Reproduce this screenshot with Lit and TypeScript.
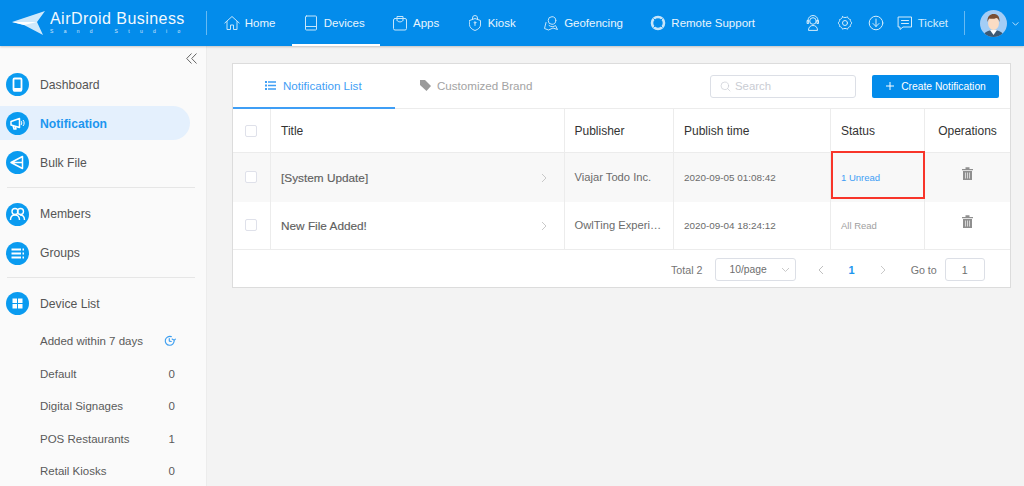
import { LitElement, html, css, svg } from "lit";
import { customElement } from "lit/decorators.js";

const s = (w: number, body: unknown, vb = "0 0 16 16", sw = 1) => html`<svg class="ic" width=${w} height=${w} viewBox=${vb} fill="none" stroke="currentColor" stroke-width=${sw} stroke-linecap="round" stroke-linejoin="round">${body}</svg>`;

const navIcons: Record<string, unknown> = {
  home: s(16, svg`<path d="M.8 8 8 1.500 15.200 8M3 6.500v8h3.500V10h3v4.500H13v-8"/>`),
  devices: s(16, svg`<rect x="2.500" y="1" width="11" height="14" rx="1"/><path d="M2.500 11.500h11"/>`),
  apps: s(16, svg`<rect x="1.500" y="3.500" width="13" height="11.500" rx="1.500"/><path d="M5 5V1.500h6V5M5 5.500c1 2 5 2 6 0"/>`),
  kiosk: s(16, svg`<path d="M2.500 5.500 8 3.500l5.500 2V10c0 2.500-2.500 4.500-5.500 5.500C5 14.500 2.500 12.500 2.500 10zM5.500 4.500V3a2.500 2.500 0 0 1 5 0v1.500"/><path d="M8 7.500v3"/><circle cx="8" cy="7.500" r=".8"/>`),
  geo: s(16, svg`<circle cx="9" cy="5.500" r="3.800"/><path d="M6 10.500c1.500 1.500 5 1.500 6.500 0l2 4L10 13l-4.500 2-4-1.500L3 7.500"/>`),
  remote: s(16, svg`<circle cx="8" cy="8" r="6" stroke-width="2.600"/><path d="M3.800 3.800 5.800 5.800M12.200 3.800 10.200 5.800M3.800 12.200 5.800 10.200M12.200 12.200 10.200 10.200" stroke="#038ceb" stroke-width="1"/>`),
};

const sideIcons: Record<string, unknown> = {
  dash: svg`<rect x="7.500" y="5.500" width="8" height="12" rx="1" fill="none" stroke="#fff" stroke-width="1.800"/><path d="M7 15h9v2.500a1 1 0 0 1-1 1H8a1 1 0 0 1-1-1z" fill="#fff"/>`,
  notif: svg`<path d="M5 9.500 13.500 6.500v9L5 13zM7 13.500l1 3.500h2l-1-3" fill="none" stroke="#fff" stroke-width="1.500" stroke-linejoin="round"/><path d="M15 9c1 .8 1 3 0 4M17 8c1.500 1.500 1.500 4.500 0 6" fill="none" stroke="#fff"/>`,
  bulk: svg`<path d="M16.500 5.500 5 11.500l11.500 6zM5 11.500h11.500" fill="none" stroke="#fff" stroke-width="1.500" stroke-linejoin="round"/>`,
  members: svg`<circle cx="9" cy="8.500" r="3" fill="none" stroke="#fff" stroke-width="1.400"/><circle cx="14.500" cy="8.500" r="3" fill="none" stroke="#fff" stroke-width="1.400"/><path d="M4.500 17c0-3.500 2-5 4.500-5s4.500 1.500 4.500 5M14 12c2.500 0 4.500 1.500 4.500 5" fill="none" stroke="#fff" stroke-width="1.400"/>`,
  groups: svg`<path d="M5.500 7.500H15M5.500 11.500H15M5.500 15.500H15" stroke="#fff" stroke-width="2"/><path d="M16.500 7.500h1.500M16.500 11.500h1.500M16.500 15.500h1.500" stroke="#fff" stroke-width="2"/>`,
  list: svg`<path d="M6.500 6.500h4.500v4.500H6.500zM12 6.500h4.500v4.500H12zM6.500 12h4.500v4.500H6.500zM12 12h4.500v4.500H12z" fill="#fff"/>`,
};

const circle = (k: string) => html`<svg class="circ" width="23" height="23" viewBox="0 0 23 23"><circle cx="11.500" cy="11.500" r="11.500" fill="#0a9bf0"/>${sideIcons[k]}</svg>`;

const trash = html`<svg width="11" height="13" viewBox="0 0 11 13" fill="#8f8f8f"><path d="M0 2h11v1.200H0zM3.500 .3h4V2h-4zM1 4h9v9H1z"/><path d="M3.500 5.500v6M5.500 5.500v6M7.500 5.500v6" stroke="#f5f5f5" stroke-width=".7"/></svg>`;
const chev = html`<svg class="chev" width="6" height="10" viewBox="0 0 6 10" fill="none" stroke="#c9c9c9"><path d="M1 1l4 4-4 4"/></svg>`;

@customElement("app-root")
export class AppRoot extends LitElement {
  static styles = css`
    :host { display: block; width: 1024px; height: 486px; overflow: hidden; font-family: "Liberation Sans", Arial, sans-serif; background: #f3f3f3; }
    .ic { display: block; flex: none; }
    header { height: 46px; background: #038ceb; color: #fff; display: flex; align-items: center; box-shadow: 0 1px 2px rgba(0,0,0,.2); position: relative; z-index: 2; }
    .logo { width: 206px; height: 46px; flex: none; display: flex; align-items: center; padding-left: 12px; box-sizing: border-box; position: relative; }
    .logo-t { margin-left: 5px; margin-top: -1px; display: flex; flex-direction: column; }
    .logo-a { font-size: 16px; line-height: 16px; letter-spacing: .45px; white-space: nowrap; opacity: .95; }
    .logo-b { font-size: 5px; line-height: 7px; letter-spacing: 10.300px; white-space: nowrap; opacity: .8; margin-top: 1px; }
    .vd { width: 1px; height: 24px; background: rgba(255,255,255,.4); flex: none; }
    nav { display: flex; height: 46px; margin-left: 3px; }
    .n { display: flex; align-items: center; gap: 5px; font-size: 11.500px; height: 46px; padding: 0 13.700px; box-sizing: border-box; color: #e9f5fd; white-space: nowrap; position: relative; }
    .n svg { opacity: .85; }
    .n.on::after { content: ""; position: absolute; left: 3px; right: -2px; bottom: 0; height: 2px; background: #fff; }
    .tools { margin-left: auto; display: flex; align-items: center; height: 46px; color: #d4ecfb; font-size: 11.500px; padding-right: 5px; }
    .tools .t { margin-right: 15px; }
    .tools .t.agent { margin-right: 16px; }
    .tools .t.dl { margin-right: 13px; }
    .ticket { display: flex; gap: 5px; align-items: center; margin-right: 16px; white-space: nowrap; }
    .avatar { margin-left: 15px; margin-right: 5px; flex: none; display: block; }
    .main { display: flex; height: 440px; }
    aside { width: 207px; flex: none; height: 440px; box-sizing: border-box; background: #fafafa; border-right: 1px solid #ececec; overflow: hidden; color: #555; }
    .col { height: 19px; box-sizing: border-box; padding: 5px 9px 0 0; display: flex; justify-content: flex-end; align-items: center; color: #666; }
    .it { height: 39px; display: flex; align-items: center; font-size: 12.200px; position: relative; }
    .it .circ { margin-left: 6px; margin-right: 11px; flex: none; position: relative; }
    .it span { position: relative; }
    .it.on { color: #1c96ef; font-weight: 700; }
    .it.on::before { content: ""; position: absolute; left: 0; top: 2px; width: 190px; height: 34px; background: #e4f0fd; border-radius: 0 17px 17px 0; }
    hr { border: 0; height: 1px; background: #e6e6e6; margin: 5px 7px 6.500px 7px; width: 188px; }
    hr.second { margin-top: 4px; }
    .sub { height: 32.500px; display: flex; align-items: center; padding: 0 31px 0 40px; font-size: 11.500px; justify-content: space-between; color: #5a5a5a; }
    .subs { margin-top: 2px; }
    .clock { margin-right: -2px; color: #3a9df0; }
    .content { flex: 1; padding: 17px 13px 0 25px; }
    .card { width: 779px; height: 225px; box-sizing: border-box; background: #fff; border: 1px solid #dcdcdc; position: relative; }
    .tabs { height: 45px; display: flex; align-items: center; border-bottom: 1px solid #ececec; box-sizing: border-box; position: relative; }
    .tab { display: flex; align-items: center; gap: 7px; font-size: 11.600px; height: 44px; box-sizing: border-box; white-space: nowrap; }
    .tab.a { width: 162px; padding-left: 32px; color: #3f9ef5; border-bottom: 2px solid #3f9ef5; margin-bottom: -1px; height: 45px; }
    .tab.b { padding-left: 25px; padding-bottom: 2px; color: #a3a3a3; gap: 6px; }
    .search { margin-left: auto; width: 146px; height: 23px; box-sizing: border-box; border: 1px solid #dcdfe6; border-radius: 3px; display: flex; align-items: center; padding-left: 9px; gap: 4px; color: #c9ccd3; font-size: 11.400px; margin-right: 16px; }
    .create { width: 127px; height: 23px; margin-right: 11px; background: #038ceb; color: #fff; font-size: 10.300px; display: flex; align-items: center; justify-content: center; gap: 6px; border-radius: 2px; white-space: nowrap; }
    .r { display: grid; grid-template-columns: 38px 294px 109px 157px 94px 85px; }
    .r > div { display: flex; align-items: center; box-sizing: border-box; border-right: 1px solid #ececec; padding-left: 10px; font-size: 11px; color: #6b6b6b; position: relative; white-space: nowrap; overflow: visible; }
    .r > div:last-child { border-right: 0; padding-left: 0; justify-content: center; }
    .r > div:first-child { padding-left: 12px; padding-bottom: 1px; }
    .h { height: 44px; border-bottom: 1px solid #ececec; box-sizing: border-box; }
    .h > div { color: #333; font-size: 12px; padding-top: 1px; }
    .h > div:first-child { padding-top: 0; padding-bottom: 0; }
    .r1 { height: 49px; background: #f8f8f8; }
    .r2 { height: 48px; border-bottom: 1px solid #ececec; box-sizing: border-box; }
    .r > .title { font-size: 11.800px; color: #606060; justify-content: space-between; padding-right: 17px; padding-left: 10px; }
    .title b { font-weight: 400; -webkit-text-stroke: .15px #606060; }
    .r > .pub { font-size: 11.200px; padding-left: 9.500px; padding-bottom: 1px; }
    .r > .time { font-size: 9.900px; padding-bottom: 1px; }
    .r > .stat { padding-bottom: 1px; }
    .h > .pubh { padding-left: 9.500px; }
    .cb { width: 12px; height: 12px; border: 1px solid #dfe1ea; border-radius: 2px; background: #fff; box-sizing: border-box; }
    .unread { color: #3f9ef5; font-size: 9.500px; }
    .allread { color: #a0a0a0; font-size: 9.500px; }
    .mark { position: absolute; left: 0; top: -2px; width: 94px; height: 48px; box-sizing: border-box; border: 2px solid #f8352a; }
    .trash { margin-top: -6px; display: block; }
    .foot { height: 37px; padding-top: 2px; box-sizing: border-box; display: flex; align-items: center; font-size: 10.700px; color: #757575; padding-left: 438px; white-space: nowrap; }
    .sel { width: 81px; height: 23px; box-sizing: border-box; margin-left: 12px; border: 1px solid #dcdfe6; border-radius: 3px; display: flex; align-items: center; justify-content: space-between; padding: 0 5px 0 14px; color: #6e6e6e; font-size: 10.300px; }
    .pg { margin-left: 22px; display: flex; align-items: center; }
    .pg b { color: #1c96ef; font-size: 11px; margin: 0 25px 0 25px; }
    .goto { margin-left: 25px; }
    .inp { width: 40px; height: 23px; margin-left: 8px; box-sizing: border-box; border: 1px solid #dcdfe6; border-radius: 3px; display: flex; align-items: center; justify-content: center; color: #6e6e6e; }
  `;

  private row(cls: string, title: string, pub: string, time: string, status: unknown, mark = false) {
    return html`<div class="r ${cls}">
      <div><span class="cb"></span></div>
      <div class="title"><b>${title}</b>${chev}</div>
      <div class="pub">${pub}</div>
      <div class="time">${time}</div>
      <div class="stat">${status}${mark ? html`<span class="mark"></span>` : ""}</div>
      <div><span class="trash">${trash}</span></div>
    </div>`;
  }

  render() {
    return html`
      <header>
        <div class="logo">
          <svg width="33" height="24" viewBox="0 0 33 24"><path d="M0 11 33 0 25 11 31 24 12 14z" fill="#cfe9fb"/><path d="M0 11 25 11 12 14z" fill="#fff"/></svg>
          <div class="logo-t"><div class="logo-a">AirDroid Business</div><div class="logo-b">Sand Studio</div></div>
        </div>
        <div class="vd"></div>
        <nav>
          <div class="n">${navIcons.home}Home</div>
          <div class="n on">${navIcons.devices}Devices</div>
          <div class="n">${navIcons.apps}Apps</div>
          <div class="n">${navIcons.kiosk}Kiosk</div>
          <div class="n">${navIcons.geo}Geofencing</div>
          <div class="n">${navIcons.remote}Remote Support</div>
        </nav>
        <div class="tools">
          <span class="t agent">${s(16, svg`<circle cx="8" cy="6" r="3.300"/><path d="M3 7V5.500a5 5 0 0 1 10 0V7M2.500 5.500h1.200v3H2.500zM12.300 5.500h1.200v3h-1.200zM3.500 15c0-3 2-4.500 4.500-4.500s4.500 1.500 4.500 4.500z"/>`)}</span>
          <span class="t">${s(16, svg`<path d="M5.500 1.800c1.500 1 3.500 1 5 0 .3 1.500 1.500 2.500 3 2.800-.5 1.500 .5 2.300 1.500 3.400-1 1-2 2-1.500 3.400-1.500 .3-2.700 1.300-3 2.800-1.500-1-3.500-1-5 0-.3-1.500-1.500-2.500-3-2.800C3 10 2 9 1 8c1-1.100 2-1.900 1.500-3.400 1.500-.3 2.700-1.300 3-2.800z"/><circle cx="8" cy="8" r="2.500"/>`)}</span>
          <span class="t dl">${s(16, svg`<circle cx="8" cy="8" r="6.800"/><path d="M8 4v7.500M5 8.500l3 3 3-3"/>`)}</span>
          <span class="ticket">${s(16, svg`<path d="M1.500 2h13v10H6l-3 2.500V12H1.500zM4.500 5.500h7M4.500 8.500h7"/>`)}Ticket</span>
          <div class="vd"></div>
          <svg class="avatar" width="27" height="27" viewBox="0 0 27 27"><defs><clipPath id="av"><circle cx="13.500" cy="13.500" r="13.500"/></clipPath></defs><g clip-path="url(#av)"><rect width="27" height="27" fill="#a3cdf6"/><path d="M3 27c1-5 5-7 10.500-7S23 22 24 27z" fill="#3d5a74"/><path d="M10 20h7l-3.500 5z" fill="#fff"/><ellipse cx="13.500" cy="13" rx="5.500" ry="7" fill="#fbdcc4"/><path d="M7.500 12c-.5-6 3-8 6-8s6.500 1.500 6 8c-1-3-2-4-3-4-2 1-6 1-7 .5-1 .5-1.500 2-2 3.500z" fill="#7a4f34"/></g></svg>
          ${s(7, svg`<path d="M1 3l3 3 3-3" stroke="#d4ecfb"/>`, "0 0 8 8")}
        </div>
      </header>
      <div class="main">
        <aside>
          <div class="col"><svg width="11" height="11" viewBox="0 0 11 11" fill="none" stroke="currentColor"><path d="M5.500 .5 .7 5.500l4.800 5M10.500 .5 5.700 5.500l4.800 5"/></svg></div>
          <div class="it">${circle("dash")}<span>Dashboard</span></div>
          <div class="it on">${circle("notif")}<span>Notification</span></div>
          <div class="it">${circle("bulk")}<span>Bulk File</span></div>
          <hr />
          <div class="it">${circle("members")}<span>Members</span></div>
          <div class="it">${circle("groups")}<span>Groups</span></div>
          <hr class="second" />
          <div class="it">${circle("list")}<span>Device List</span></div>
          <div class="subs">
            <div class="sub"><span>Added within 7 days</span><span class="clock">${s(13, svg`<path d="M9 2a5.500 5.500 0 1 0 3.500 4.500M6.500 4.500v3l2.500 .5M10 5l2.500 1.500L14 5" stroke-width="1.400"/>`)}</span></div>
            <div class="sub"><span>Default</span><span>0</span></div>
            <div class="sub"><span>Digital Signages</span><span>0</span></div>
            <div class="sub"><span>POS Restaurants</span><span>1</span></div>
            <div class="sub"><span>Retail Kiosks</span><span>0</span></div>
          </div>
        </aside>
        <div class="content">
          <div class="card">
            <div class="tabs">
              <div class="tab a"><svg width="11" height="9" viewBox="0 0 11 9" fill="currentColor"><path d="M0 0h2v2H0zM3 .3h8v1.400H3zM0 3.500h2v2H0zM3 3.800h8v1.400H3zM0 7h2v2H0zM3 7.300h8v1.400H3z"/></svg>Notification List</div>
              <div class="tab b"><svg width="11" height="11" viewBox="0 0 11 11" fill="#9a9a9a"><path d="M0 0h5l6 6-4.500 5L0 5z"/></svg>Customized Brand</div>
              <div class="search">${s(11, svg`<circle cx="7" cy="7" r="5.500"/><path d="M11 11l3.500 3.500"/>`)}Search</div>
              <div class="create"><svg width="10" height="10" viewBox="0 0 10 10" stroke="#fff"><path d="M5 1v8M1 5h8"/></svg>Create Notification</div>
            </div>
            <div class="r h"><div><span class="cb"></span></div><div>Title</div><div class="pubh">Publisher</div><div>Publish time</div><div>Status</div><div>Operations</div></div>
            ${this.row("r1", "[System Update]", "Viajar Todo Inc.", "2020-09-05 01:08:42", html`<span class="unread">1 Unread</span>`, true)}
            ${this.row("r2", "New File Added!", "OwlTing Experi…", "2020-09-04 18:24:12", html`<span class="allread">All Read</span>`)}
            <div class="foot">
              <span>Total 2</span>
              <div class="sel"><span>10/page</span><svg width="9" height="6" viewBox="0 0 9 6" fill="none" stroke="#c9c9c9"><path d="M1 1l3.500 3.500L8 1"/></svg></div>
              <div class="pg"><svg width="6" height="10" viewBox="0 0 6 10" fill="none" stroke="#bfbfbf"><path d="M5 1 1 5l4 4"/></svg><b>1</b>${chev}</div>
              <span class="goto">Go to</span>
              <div class="inp">1</div>
            </div>
          </div>
        </div>
      </div>
    `;
  }
}
